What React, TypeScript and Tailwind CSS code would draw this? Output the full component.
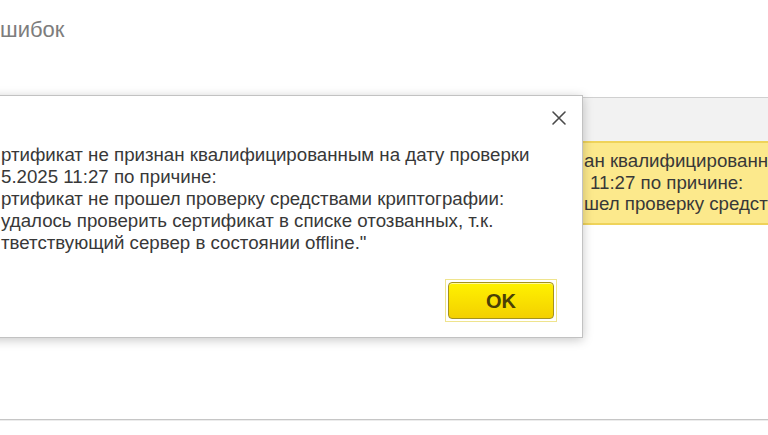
const message = [
  'ртификат не признан квалифицированным на дату проверки',
  '5.2025 11:27 по причине:',
  'ртификат не прошел проверку средствами криптографии:',
  'удалось проверить сертификат в списке отозванных, т.к.',
  'тветствующий сервер в состоянии offline."',
];

const notice = ['ан квалифицированным на дату проверки', '11:27 по причине:', 'шел проверку средствами криптографии:'];

function CloseIcon() {
  return (
    <svg width="16" height="16" viewBox="0 0 16 16" fill="none">
      <path d="M2 2L14 14M14 2L2 14" stroke="#4a4a4a" strokeWidth="1.6" strokeLinecap="round" />
    </svg>
  );
}

export default function App() {
  return (
    <div className="relative w-[768px] h-[435px] overflow-hidden bg-white font-['Liberation_Sans',Arial,sans-serif]">
      {/* page title */}
      <div className="h-[97px] pt-[15px] text-[22px] leading-[30px] text-[#7d7d7d]">
        шибок
      </div>

      {/* command bar */}
      <div className="h-[44px] border-t border-[#d0d0d0] bg-[#f2f2f2]" />

      {/* warning notice */}
      <div className="h-[84px] border-y-2 border-[#efd35a] bg-[#fce98c] pl-[584px] pt-[7px] text-[18.7px] leading-[21.5px] text-[#383838] whitespace-nowrap">
        <div>{notice[0]}</div>
        <div className="pl-[6px]">{notice[1]}</div>
        <div>{notice[2]}</div>
      </div>

      <div className="h-[194px]" />
      <div className="h-[2px] border-t border-[#c6c6c6] bg-[#ececec]" />

      {/* modal dialog */}
      <div className="absolute left-[-40px] top-[95px] w-[623px] h-[243px] bg-white border border-[#c2c2c2] shadow-[0_2px_10px_rgba(0,0,0,0.22)]">
        <button className="absolute top-[14px] right-[15px] p-0">
          <CloseIcon />
        </button>
        <div className="pl-[40px] pt-[48px] text-[18.7px] leading-[22px] text-[#383838] whitespace-nowrap">
          {message.map((line) => (
            <div key={line}>{line}</div>
          ))}
        </div>
        <div className="flex justify-end pr-[25px] pt-[25px]">
          <div className="border border-[#efe48e] p-[2px]">
            <button className="w-[106px] h-[37px] rounded-[4px] border border-[#a3921f] bg-gradient-to-b from-[#fff200] to-[#f3d000] shadow-[inset_0_1px_0_rgba(255,255,255,0.6)] text-[20px] font-bold text-[#4a3f06]">
              OK
            </button>
          </div>
        </div>
      </div>
    </div>
  );
}
